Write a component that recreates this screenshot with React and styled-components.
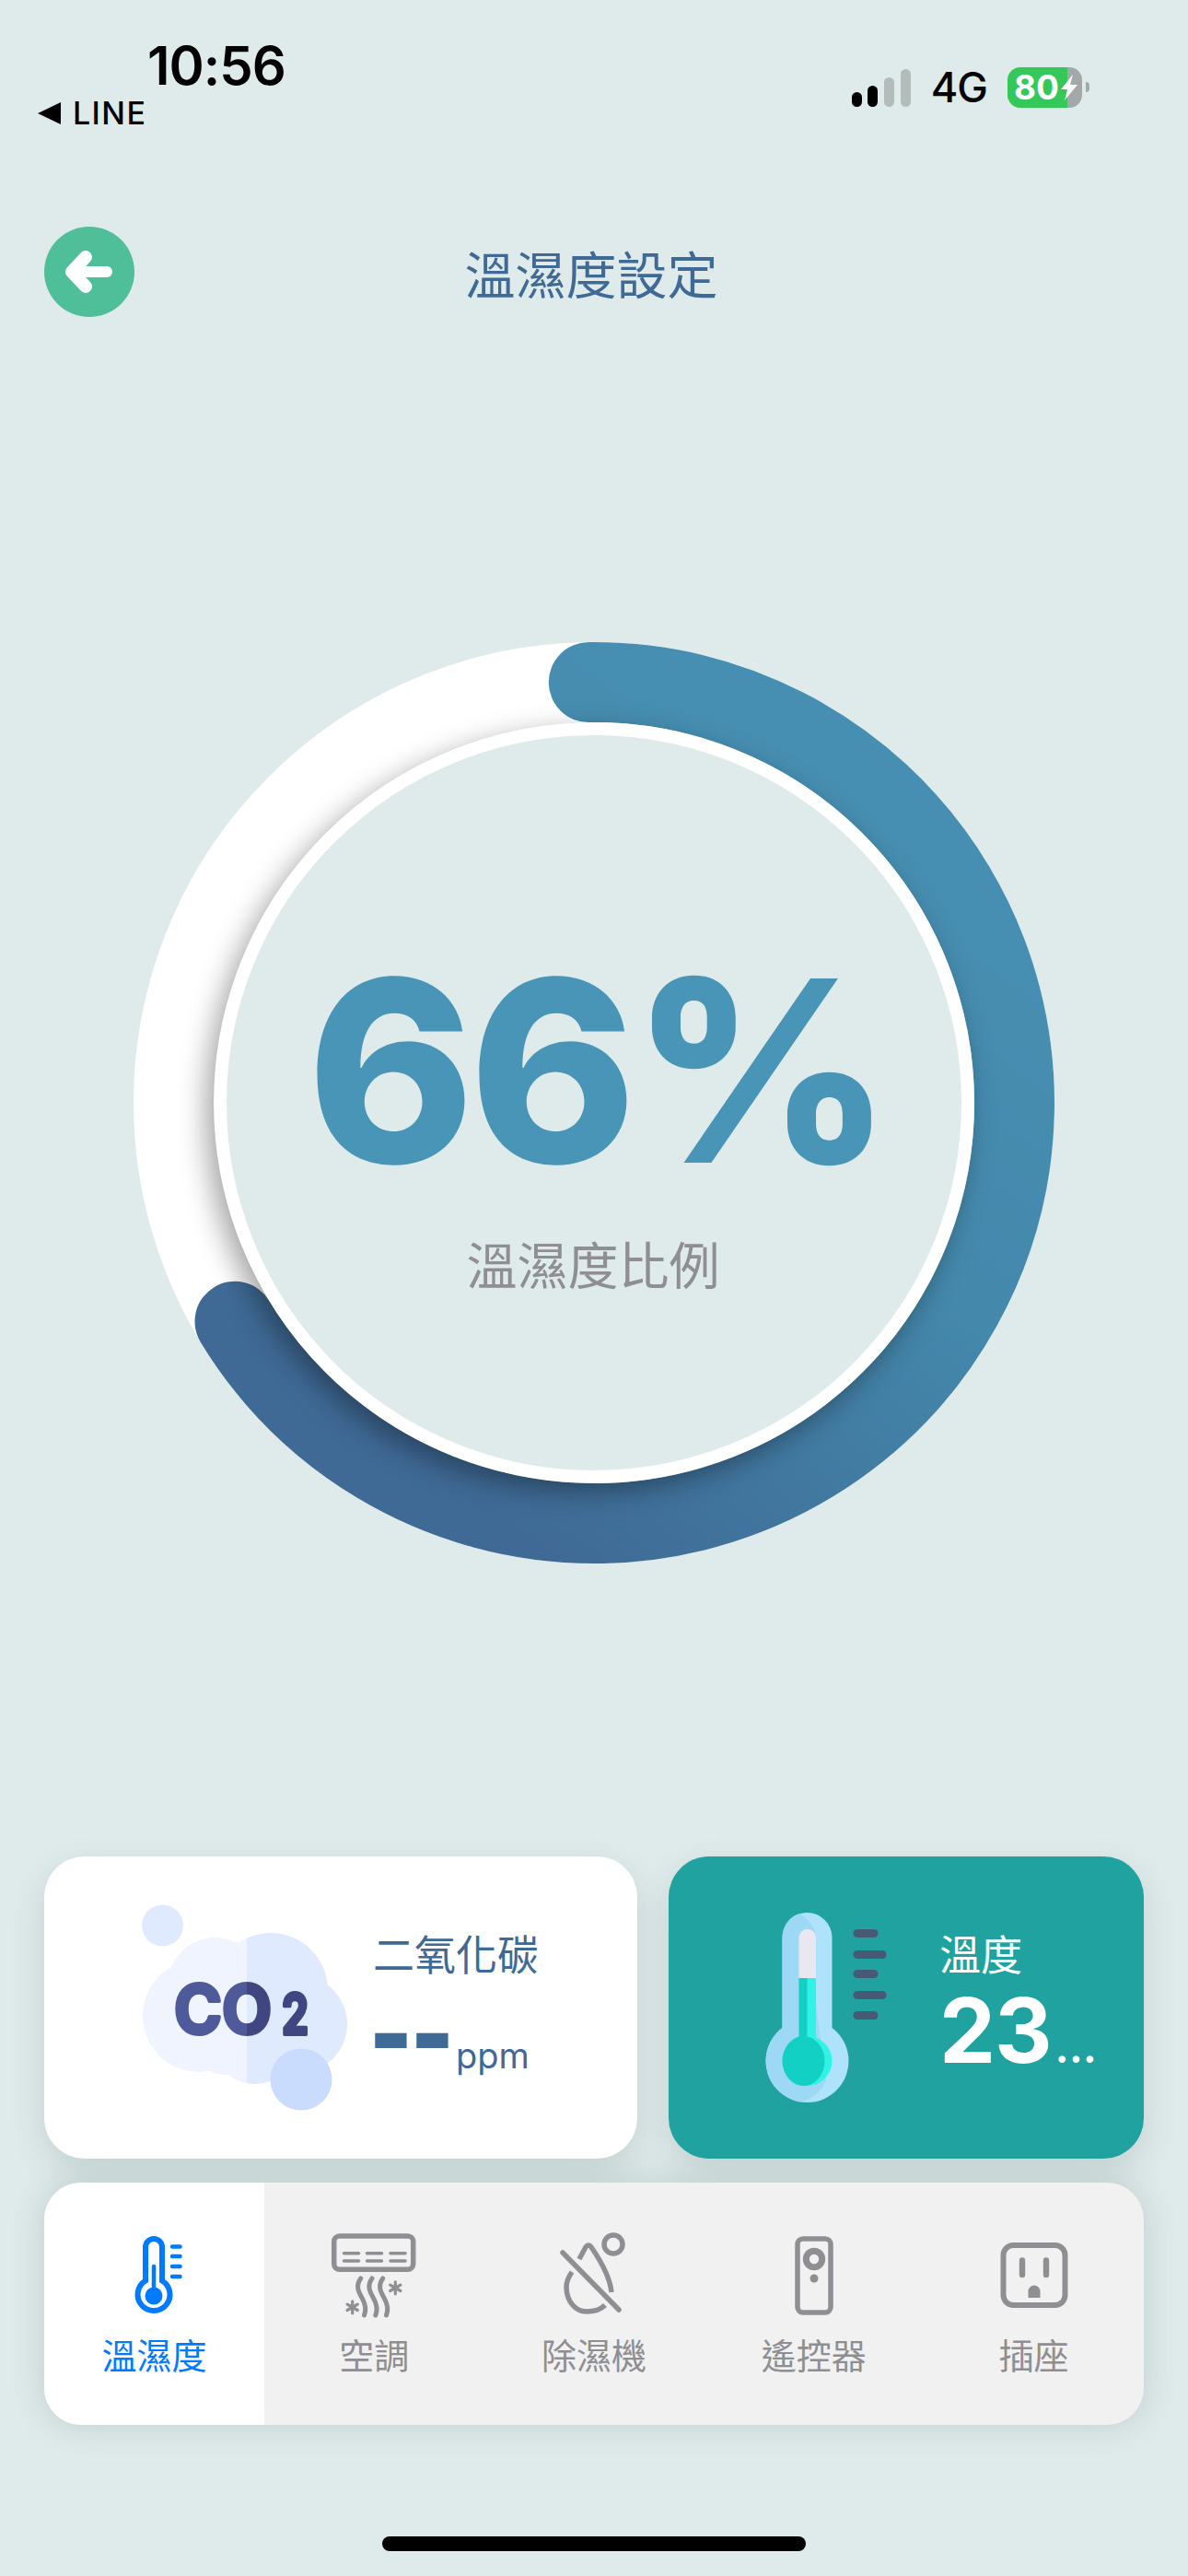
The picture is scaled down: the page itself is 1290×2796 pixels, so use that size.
import styled, { createGlobalStyle } from 'styled-components'

const GlobalStyle = createGlobalStyle`
  html, body { margin: 0; padding: 0; background: #dfebea; }
  * { box-sizing: border-box; }
`

const CJK = `"Noto Sans CJK TC", "Inter", sans-serif`
const LATIN = `"Inter", "Noto Sans CJK TC", sans-serif`

const Page = styled.div`
  width: 1290px;
  height: 2796px;
  padding: 0 48px;
  background: #dfebea;
  display: flex;
  flex-direction: column;
  overflow: hidden;
  font-family: ${CJK};
`

// status bar
const StatusBar = styled.div`
  height: 246px;
  margin: 0 -48px;
  padding: 0 107px 0 41px;
  display: flex;
  justify-content: space-between;
  align-items: flex-start;
  color: #000;
  font-family: ${LATIN};
`
const StatusLeft = styled.div`
  padding-top: 39px;
  display: flex;
  flex-direction: column;
`
const Clock = styled.div`
  margin-left: 119px;
  font-size: 58px;
  line-height: 64px;
  font-weight: 600;
  letter-spacing: -1px;
`
const BackToApp = styled.div`
  display: flex;
  align-items: center;
  gap: 13px;
  font-size: 34px;
  line-height: 40px;
  font-weight: 500;
  letter-spacing: 1.4px;
`
const BackTriangle = styled.span`
  width: 0;
  height: 0;
  border-top: 12px solid transparent;
  border-bottom: 12px solid transparent;
  border-right: 25px solid #000;
`
const StatusRight = styled.div`
  padding-top: 73px;
  display: flex;
  align-items: flex-start;
`
const Signal = styled.div`
  width: 64px;
  height: 41px;
  margin-top: 2px;
  display: flex;
  align-items: flex-end;
  justify-content: space-between;
`
const SignalBar = styled.span`
  width: 11px;
  height: ${(p) => p.$h}px;
  border-radius: 6px;
  background: ${(p) => (p.$on ? '#000' : '#b3bcbb')};
`
const NetworkLabel = styled.div`
  margin-left: 22px;
  font-size: 45px;
  line-height: 44px;
  font-weight: 500;
  letter-spacing: -1px;
`
const Battery = styled.div`
  margin-left: 22px;
  width: 81px;
  height: 44px;
  padding-left: 7px;
  border-radius: 14px;
  background: linear-gradient(to right, #34c759 80.5%, #a3a8a8 80.5%);
  display: flex;
  align-items: center;
  gap: 2px;
  color: #fff;
  font-size: 37px;
  font-weight: 700;
  line-height: 44px;
`
const BatteryNub = styled.span`
  width: 4px;
  height: 11px;
  margin: 16px 0 0 4px;
  border-radius: 0 6px 6px 0;
  background: #a3a8a8;
`

// header
const Header = styled.header`
  display: grid;
  grid-template-columns: 98px 1fr 98px;
  align-items: center;
  height: 98px;
`
const BackButton = styled.button`
  width: 98px;
  height: 98px;
  padding: 0;
  border: 0;
  border-radius: 50%;
  background: #4fbf9a;
  display: flex;
`
const Title = styled.h1`
  margin: 0;
  padding-right: 6px;
  text-align: center;
  color: #3f6a96;
  font-size: 55px;
  line-height: 64px;
  font-weight: 400;
`

// gauge
const Gauge = styled.section`
  width: 1002px;
  height: 1002px;
  margin: 352px auto 0;
  display: grid;
`
const GaugeRing = styled.svg`
  grid-area: 1 / 1;
`
const Dial = styled.div`
  grid-area: 1 / 1;
  place-self: center;
  width: 826px;
  height: 826px;
  border: 14px solid #fff;
  border-radius: 50%;
  background: #dfebea;
  box-shadow: -8px 10px 30px rgba(0, 0, 0, 0.36);
  display: flex;
  flex-direction: column;
  align-items: center;
  padding-top: 214px;
`
const Percent = styled.div`
  padding-left: 6px;
  color: #4895b7;
  font-family: ${LATIN};
  font-size: 275px;
  line-height: 300px;
  font-weight: 800;
  letter-spacing: -6px;
`
const DialLabel = styled.div`
  margin-top: 26px;
  padding-right: 2px;
  color: #8e8e93;
  font-size: 55px;
  line-height: 64px;
`

// sensor cards
const Cards = styled.section`
  margin-top: 317px;
  display: grid;
  grid-template-columns: 644px 516px;
  gap: 34px;
`
const Card = styled.div`
  height: 328px;
  border-radius: 44px;
  background: ${(p) => p.$bg};
  box-shadow: 0 14px 36px rgba(60, 90, 90, 0.16);
  display: flex;
  align-items: center;
`
const CardIcon = styled.svg`
  flex: none;
  margin-left: ${(p) => p.$left}px;
`
const CardText = styled.div`
  margin: 0 0 14px ${(p) => p.$gap}px;
  display: flex;
  flex-direction: column;
  min-width: 0;
  color: ${(p) => p.$color};
`
const CardLabel = styled.div`
  margin-bottom: 8px;
  font-size: 45px;
  line-height: 56px;
`
const ValueRow = styled.div`
  white-space: nowrap;
  font-family: ${LATIN};
  line-height: 96px;
  height: 96px;
`
const Dashes = styled.span`
  margin-left: -3px;
  font-family: "Liberation Sans", sans-serif;
  font-size: 135px;
  line-height: 96px;
  font-weight: 700;
`
const Unit = styled.span`
  margin-left: 3px;
  font-size: 38px;
  line-height: 40px;
  vertical-align: 5px;
`
const Reading = styled.span`
  font-size: 97px;
  line-height: 96px;
  font-weight: 700;
  letter-spacing: -1px;
`
const Ellipsis = styled.span`
  margin-left: 4px;
  font-size: 44px;
  line-height: 40px;
  font-weight: 700;
  letter-spacing: 0.5px;
`

// tab bar
const TabBar = styled.nav`
  margin-top: 26px;
  height: 263px;
  border-radius: 40px;
  background: #f1f1f1;
  box-shadow: 0 0 36px rgba(60, 90, 90, 0.2);
  display: grid;
  grid-template-columns: repeat(5, 1fr);
  overflow: hidden;
`
const Tab = styled.div`
  padding-top: 46px;
  display: flex;
  flex-direction: column;
  align-items: center;
  background: ${(p) => (p.$active ? '#fff' : 'transparent')};
  color: ${(p) => (p.$active ? '#007aff' : '#8e8e93')};
`
const TabIcon = styled.svg`
  display: block;
`
const TabLabel = styled.div`
  margin-top: 7px;
  font-size: 38px;
  line-height: 46px;
`
const HomeBar = styled.div`
  width: 460px;
  height: 16px;
  margin: 121px auto 0;
  border-radius: 8px;
  background: #000;
`

function polar(cx, cy, r, pct) {
  const a = (pct / 100) * Math.PI * 2
  return [cx + r * Math.sin(a), cy - r * Math.cos(a)]
}

function HumidityRing({ value }) {
  // the arc overshoots its value a little at both ends, as in the app
  const [sx, sy] = polar(501, 501, 456.5, -0.2)
  const [x, y] = polar(501, 501, 456.5, value + 0.3)
  const large = value > 50 ? 1 : 0
  return (
    <GaugeRing width="1002" height="1002" viewBox="0 0 1002 1002">
      <defs>
        <linearGradient id="ring" x1="0.75" y1="0.1" x2="0.2" y2="0.9">
          <stop offset="0" stopColor="#478fb2" />
          <stop offset="0.45" stopColor="#4488ac" />
          <stop offset="1" stopColor="#3f6a96" />
        </linearGradient>
      </defs>
      <circle cx="501" cy="501" r="456.5" fill="none" stroke="#fff" strokeWidth="87" />
      <path
        d={`M${sx} ${sy} A456.5 456.5 0 ${large} 1 ${x} ${y}`}
        fill="none"
        stroke="url(#ring)"
        strokeWidth="87"
        strokeLinecap="round"
      />
    </GaugeRing>
  )
}

function Co2Icon() {
  return (
    <CardIcon $left={106} width="224" height="224" viewBox="0 0 224 224">
      <defs>
        <clipPath id="leftHalf"><rect x="0" y="0" width="114" height="224" /></clipPath>
        <clipPath id="rightHalf"><rect x="114" y="0" width="110" height="224" /></clipPath>
      </defs>
      <circle cx="22.5" cy="23" r="22.5" fill="#dfeafe" />
      <g fill="#dfeafe">
        <circle cx="140" cy="93" r="62" />
        <circle cx="170" cy="130" r="53" />
        <circle cx="123" cy="150" r="45" />
      </g>
      <g fill="#eff4ff" clipPath="url(#leftHalf)">
        <circle cx="62" cy="121" r="61" />
        <circle cx="80" cy="88" r="52" />
        <circle cx="90" cy="155" r="30" />
        <circle cx="123" cy="150" r="45" />
        <circle cx="140" cy="93" r="62" />
      </g>
      <circle cx="173" cy="190" r="33.5" fill="#c9dcfe" />
      <g fontFamily="Inter, sans-serif" fontWeight="700" strokeWidth="4" strokeLinejoin="round">
        <g fill="#4e5a9a" stroke="#4e5a9a" clipPath="url(#leftHalf)">
          <text x="35" y="140" fontSize="73" textLength="106" lengthAdjust="spacingAndGlyphs">CO</text>
        </g>
        <g fill="#3f4680" stroke="#3f4680" clipPath="url(#rightHalf)">
          <text x="35" y="140" fontSize="73" textLength="106" lengthAdjust="spacingAndGlyphs">CO</text>
          <text x="152" y="141" fontSize="60" textLength="29" lengthAdjust="spacingAndGlyphs">2</text>
        </g>
      </g>
    </CardIcon>
  )
}

function ThermoIcon() {
  const ticks = [[18, 27], [41, 36], [62, 27], [85, 36], [107, 27]]
  return (
    <CardIcon $left={105} width="132" height="206" viewBox="0 0 132 206">
      <path d="M18.5 27a27 27 0 0 1 54 0v98a45 45 0 1 1-54 0z" fill="#aee3fb" />
      <path d="M37 1C27 4 18.5 14 18.5 27v98a45 45 0 0 0 19.5 80.3C50 203 61 195 66 182L55 100V27C55 18 47 6 37 1z" fill="#9dd9f4" />
      <path d="M36.5 27a9.25 9.25 0 0 1 18.5 0v45H36.5z" fill="#e9e8f1" />
      <rect x="36.5" y="71" width="18.5" height="70" fill="#12d0c3" />
      <rect x="45.5" y="71" width="9.5" height="70" fill="#30f2e6" />
      <circle cx="45.5" cy="161" r="27" fill="#30f2e6" />
      <ellipse cx="41.5" cy="161" rx="23" ry="27" fill="#12d0c3" />
      {ticks.map(([y, w]) => (
        <rect key={y} x="95.5" y={y} width={w} height="9" rx="4.5" fill="#465a75" />
      ))}
    </CardIcon>
  )
}

function TabThermo() {
  return (
    <TabIcon width="110" height="110" viewBox="0 0 110 110" fill="none" stroke="currentColor">
      <g transform="translate(34.5 12)">
        <path d="M11.5 12a9 9 0 0 1 18 0v36.5a17.5 17.5 0 1 1-18 0z" strokeWidth="6" />
        <path d="M20.5 33v30" strokeWidth="4.5" strokeLinecap="round" />
        <circle cx="20.5" cy="65" r="9.5" fill="currentColor" stroke="none" />
        {[11.5, 22, 33, 44].map((y) => (
          <path key={y} d={`M40.5 ${y}h8.5`} strokeWidth="4.5" strokeLinecap="round" />
        ))}
      </g>
    </TabIcon>
  )
}

function Snow({ x, y }) {
  return (
    <g transform={`translate(${x} ${y})`} strokeWidth="3.2">
      <path d="M0-6.5V6.5M-5.6-3.2 5.6 3.2M-5.6 3.2 5.6-3.2" />
    </g>
  )
}

function TabAircon() {
  return (
    <TabIcon width="112" height="110" viewBox="0 0 112 110" fill="none" stroke="currentColor" strokeLinecap="round">
      <rect x="12.7" y="12" width="86" height="36.3" rx="6" strokeWidth="5.5" />
      {[30.7, 39].map((y) =>
        [[23.5, 39.5], [48.5, 64.5], [74, 90]].map(([a, b]) => (
          <path key={`${y}-${a}`} d={`M${a} ${y}H${b}`} strokeWidth="3.5" />
        ))
      )}
      {[0, 12.3, 24].map((dx) => (
        <path
          key={dx}
          d={`M${41.7 + dx} 58C${36 + dx} 66 ${39 + dx} 72 ${43 + dx} 79C${47 + dx} 86 ${48 + dx} 92 ${45.5 + dx} 98`}
          strokeWidth="5"
        />
      ))}
      <Snow x={79.3} y={68.3} />
      <Snow x={32.7} y={89.3} />
    </TabIcon>
  )
}

function TabDehumidifier() {
  return (
    <TabIcon width="110" height="110" viewBox="0 5 110 110" fill="none" stroke="currentColor" strokeWidth="5.5" strokeLinecap="round">
      <circle cx="76" cy="26" r="10" />
      <path d="M21 35 82 97" />
      <path d="M39 42 46 29Q49 25 52 29Q72 58 74 78" strokeLinecap="butt" />
      <path d="M31 56C27 62 25 66 25 72C25 88 35 99 47 99C55 99 62 97 67 92" strokeLinecap="butt" />
    </TabIcon>
  )
}

function TabRemote() {
  return (
    <TabIcon width="110" height="110" viewBox="0 0 110 110" fill="none" stroke="currentColor">
      <rect x="37" y="15" width="36" height="80" rx="6" strokeWidth="5.5" />
      <circle cx="55" cy="37" r="8.7" strokeWidth="7" />
      <circle cx="55" cy="58" r="4.5" fill="currentColor" stroke="none" />
    </TabIcon>
  )
}

function TabSocket() {
  return (
    <TabIcon width="110" height="110" viewBox="0 0 110 110" fill="none" stroke="currentColor">
      <rect x="21.5" y="22" width="67" height="65" rx="11" strokeWidth="6" />
      <path d="M42 38.5V54M68 38.5V54" strokeWidth="6.4" strokeLinecap="round" />
      <path d="M48.5 79V72a6.5 6.5 0 0 1 13 0v7z" fill="currentColor" stroke="none" />
    </TabIcon>
  )
}

const tabs = [
  { label: '溫濕度', Icon: TabThermo, active: true },
  { label: '空調', Icon: TabAircon },
  { label: '除濕機', Icon: TabDehumidifier },
  { label: '遙控器', Icon: TabRemote },
  { label: '插座', Icon: TabSocket },
]

export default function App() {
  return (
    <Page>
      <GlobalStyle />
      <StatusBar>
        <StatusLeft>
          <Clock>10:56</Clock>
          <BackToApp>
            <BackTriangle />
            LINE
          </BackToApp>
        </StatusLeft>
        <StatusRight>
          <Signal>
            <SignalBar $h={16} $on />
            <SignalBar $h={23} $on />
            <SignalBar $h={32} />
            <SignalBar $h={41} />
          </Signal>
          <NetworkLabel>4G</NetworkLabel>
          <Battery>
            80
            <svg width="18" height="28" viewBox="0 0 18 28">
              <path d="M13 0 0 16H7L4 28 18 11H10z" fill="#fff" />
            </svg>
          </Battery>
          <BatteryNub />
        </StatusRight>
      </StatusBar>

      <Header>
        <BackButton aria-label="back">
          <svg width="98" height="98" viewBox="0 0 98 98" fill="none" stroke="#fff" strokeLinecap="round" strokeLinejoin="round">
            <path d="M32 49H68" strokeWidth="12" />
            <path d="M45 33 30 49 45 65" strokeWidth="14" />
          </svg>
        </BackButton>
        <Title>溫濕度設定</Title>
      </Header>

      <Gauge>
        <HumidityRing value={66} />
        <Dial>
          <Percent>66%</Percent>
          <DialLabel>溫濕度比例</DialLabel>
        </Dial>
      </Gauge>

      <Cards>
        <Card $bg="#fff">
          <Co2Icon />
          <CardText $gap={27} $color="#3f6a96">
            <CardLabel>二氧化碳</CardLabel>
            <ValueRow>
              <Dashes>--</Dashes>
              <Unit>ppm</Unit>
            </ValueRow>
          </CardText>
        </Card>
        <Card $bg="#20a3a0">
          <ThermoIcon />
          <CardText $gap={57} $color="#fff">
            <CardLabel>溫度</CardLabel>
            <ValueRow>
              <Reading>23</Reading>
              <Ellipsis>...</Ellipsis>
            </ValueRow>
          </CardText>
        </Card>
      </Cards>

      <TabBar>
        {tabs.map(({ label, Icon, active }) => (
          <Tab key={label} $active={active}>
            <Icon />
            <TabLabel>{label}</TabLabel>
          </Tab>
        ))}
      </TabBar>

      <HomeBar />
    </Page>
  )
}
